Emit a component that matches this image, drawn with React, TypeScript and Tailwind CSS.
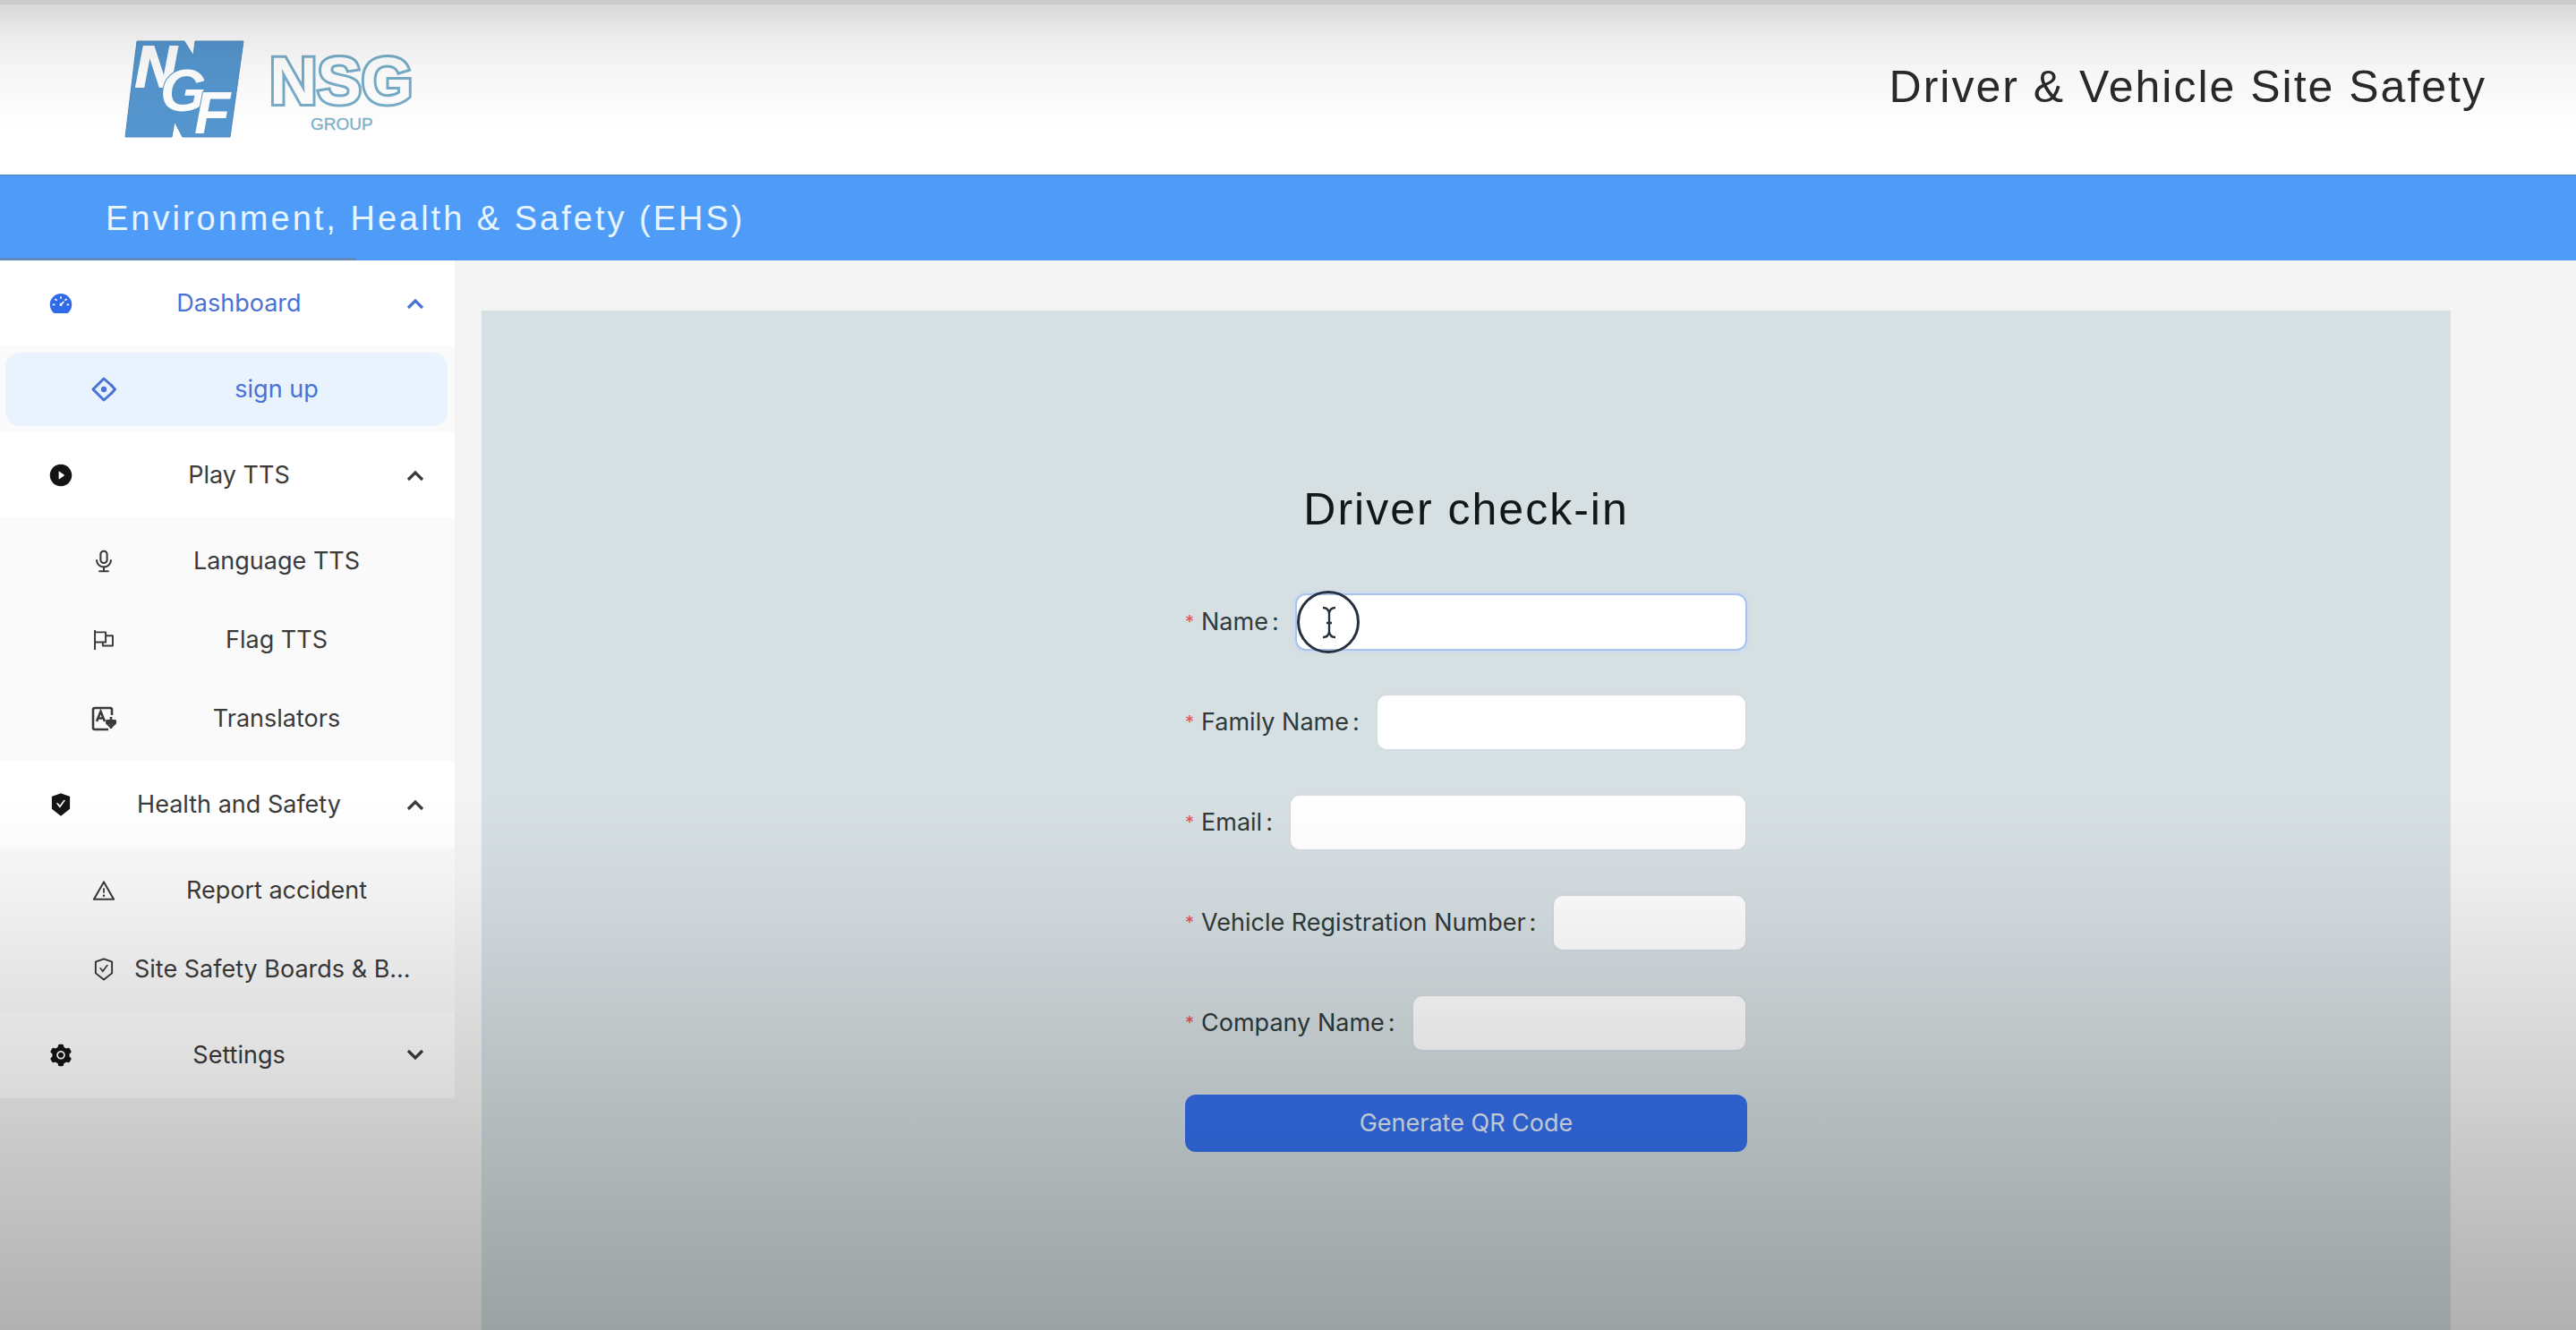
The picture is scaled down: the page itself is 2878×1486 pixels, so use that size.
import { useState } from "react";
import type { ReactNode } from "react";
import {
  AiFillDashboard,
  AiFillPlayCircle,
  AiFillSafetyCertificate,
  AiFillSetting,
  AiOutlineAudio,
  AiOutlineFlag,
  AiOutlineSafetyCertificate,
  AiOutlineWarning,
} from "react-icons/ai";

function SignUpIcon() {
  return (
    <svg viewBox="0 0 28 28" className="size-7" fill="none" stroke="currentColor" strokeWidth="3" aria-hidden="true">
      <path d="M23 10 L14 2 L2 14 L14 26 L23 18" strokeLinejoin="round" />
      <path d="M22 9 L26.5 14 L22 19" strokeLinejoin="round" />
      <circle cx="14" cy="14" r="3.2" fill="currentColor" stroke="none" />
    </svg>
  );
}

function TranslatorIcon() {
  return (
    <svg viewBox="0 0 28 28" className="size-7" fill="none" stroke="currentColor" strokeWidth="2.6" aria-hidden="true">
      <path d="M23 10 V4 Q23 2 21 2 H4 Q2 2 2 4 V24 Q2 26 4 26 H19" />
      <path d="M6 17 L10.5 6 L15 17 M8 13.5 H13" strokeWidth="2.6" />
      <path d="M22 12 V25" strokeWidth="2.6" />
      <rect x="16" y="15" width="12" height="5.5" rx="1.5" fill="currentColor" stroke="none" />
      <path d="M18 20 L22 23.5 L26 20" strokeWidth="2.2" />
    </svg>
  );
}

function Chevron({ open }: { open: boolean }) {
  return (
    <svg viewBox="0 0 20 20" className="size-5" fill="none" stroke="currentColor" strokeWidth="3.2" aria-hidden="true">
      <path d={open ? "M2 15 L10 7 L18 15" : "M2 5 L10 13 L18 5"} />
    </svg>
  );
}

type Item = { label: string; icon: ReactNode; active?: boolean };
type Group = { label: string; icon: ReactNode; open: boolean; active?: boolean; items: Item[] };

const groups: Group[] = [
  {
    label: "Dashboard",
    icon: <AiFillDashboard />,
    open: true,
    active: true,
    items: [{ label: "sign up", icon: <SignUpIcon />, active: true }],
  },
  {
    label: "Play TTS",
    icon: <AiFillPlayCircle />,
    open: true,
    items: [
      { label: "Language TTS", icon: <AiOutlineAudio /> },
      { label: "Flag TTS", icon: <AiOutlineFlag /> },
      { label: "Translators", icon: <TranslatorIcon /> },
    ],
  },
  {
    label: "Health and Safety",
    icon: <AiFillSafetyCertificate />,
    open: true,
    items: [
      { label: "Report accident", icon: <AiOutlineWarning /> },
      { label: "Site Safety Boards & Bulletins", icon: <AiOutlineSafetyCertificate /> },
    ],
  },
  { label: "Settings", icon: <AiFillSetting />, open: false, items: [] },
];

function Logo() {
  return (
    <svg viewBox="0 0 330 120" className="h-[120px] w-[330px]" role="img" aria-label="NSG Group">
      <path
        d="M18 8 H71 L81 24 L83 8 H137 L122 115 H69 L60 98 L57 115 H5 Z"
        fill="#5596cf"
        stroke="#4b88bd"
        strokeWidth="1"
      />
      <g fontFamily="'Liberation Sans', Arial, sans-serif" fontWeight="700" fontStyle="italic" fill="#fff">
        <text x="16" y="59" fontSize="64" stroke="#fff" strokeWidth="2">N</text>
        <text x="44" y="86" fontSize="66" stroke="#5596cf" strokeWidth="2" paintOrder="stroke">G</text>
        <text x="82" y="111" fontSize="66" stroke="#5596cf" strokeWidth="2" paintOrder="stroke">F</text>
      </g>
      <text
        x="166"
        y="78"
        fontFamily="'Liberation Sans', Arial, sans-serif"
        fontWeight="700"
        fontSize="74"
        fill="#fff"
        stroke="#78adc9"
        strokeWidth="6"
        paintOrder="stroke"
      >
        NSG
      </text>
      <text x="212" y="107" fontFamily="'Liberation Sans', Arial, sans-serif" fontSize="19" fill="#82b2ca" stroke="#82b2ca" strokeWidth="0.4">
        GROUP
      </text>
    </svg>
  );
}

function Sidebar() {
  const [open, setOpen] = useState(groups.map((g) => g.open));
  return (
    <nav className="w-[508px] shrink-0 self-start bg-white text-[27px] leading-8 text-[#3a3a3a]">
      {groups.map((group, i) => (
        <div key={group.label}>
          <button
            type="button"
            aria-expanded={open[i]}
            onClick={() => setOpen(open.map((o, j) => (j === i ? !o : o)))}
            className={`flex h-24 w-full items-center pr-[34px] pl-[54px] ${group.active ? "text-[#4a72d6]" : ""}`}
          >
            <span className={`text-[28px] ${group.active ? "text-[#2f6be8]" : "text-[#141414]"}`}>{group.icon}</span>
            <span className="mr-5 ml-[18px] flex-1 truncate text-center">{group.label}</span>
            <Chevron open={open[i]} />
          </button>
          {open[i] && group.items.length > 0 && (
            <ul className="bg-[#fafafa] py-1 pr-2 pl-[6px]">
              {group.items.map((item) => (
                <li key={item.label} className="py-[3px]">
                  <a
                    href="#"
                    className={`flex h-[82px] items-center rounded-2xl pr-8 pl-24 ${item.active ? "bg-[#e8f3fe] text-[#4a72d6]" : ""}`}
                  >
                    <span className="text-[28px]">{item.icon}</span>
                    <span className="ml-5 flex-1 truncate text-center">{item.label}</span>
                  </a>
                </li>
              ))}
            </ul>
          )}
        </div>
      ))}
    </nav>
  );
}

function Pointer() {
  return (
    <svg viewBox="0 0 72 72" className="pointer-events-none absolute top-1/2 left-0 size-[72px] -translate-y-1/2" fill="none" stroke="#27303f" aria-hidden="true">
      <circle cx="37" cy="36" r="33.5" strokeWidth="3" />
      <path d="M31 20 Q37 20 38 26 Q39 20 45 20 M38 25 V49 M31 53 Q37 53 38 47 Q39 53 45 53 M35 37 H41" strokeWidth="2.4" />
    </svg>
  );
}

const fields = [
  { id: "name", label: "Name", focused: true },
  { id: "family", label: "Family Name" },
  { id: "email", label: "Email" },
  { id: "vehicle", label: "Vehicle Registration Number" },
  { id: "company", label: "Company Name" },
];

export default function App() {
  return (
    <div className="relative flex min-h-screen flex-col bg-[#f4f4f4] font-['Inter','Liberation_Sans',sans-serif]">
      <header className="flex h-[195px] items-center justify-between bg-white pr-[100px] pl-[135px]">
        <Logo />
        <h1 className="font-['Liberation_Sans',Arial,sans-serif] text-[50px] tracking-[2px] text-[#2a2a2a]">
          Driver &amp; Vehicle Site Safety
        </h1>
      </header>
      <div className="relative flex h-24 items-center border-t-2 border-[#508fdb] bg-[#4f9bf8] pl-[118px]">
        <h2 className="font-['Liberation_Sans',Arial,sans-serif] text-[38px] tracking-[3px] text-[#e6f5ff]">
          Environment, Health &amp; Safety (EHS)
        </h2>
        <div className="absolute bottom-0 left-0 h-[3px] w-[398px] bg-[#6288c0]" />
      </div>
      <div className="flex flex-1">
        <Sidebar />
        <main className="mt-14 mr-[140px] ml-[30px] flex flex-1 flex-col items-center bg-[#d6dfe2] pt-[190px]">
          <h3 className="font-['Liberation_Sans',Arial,sans-serif] text-[50px] leading-[64px] tracking-[2px] text-[#10181a]">
            Driver check-in
          </h3>
          <form className="mt-[62px] flex w-[628px] flex-col gap-12 text-[27px] text-[#2f3a3c]" onSubmit={(e) => e.preventDefault()}>
            {fields.map((f) => (
              <div key={f.id} className="flex h-16 items-center">
                <label htmlFor={f.id} className="flex shrink-0 items-center whitespace-nowrap">
                  <span className="mr-2 text-[20px] text-[#e0525a]">*</span>
                  {f.label}
                  <span className="mr-[18px] ml-1">:</span>
                </label>
                <div className="relative min-w-0 flex-1">
                  <input
                    id={f.id}
                    required
                    className={`h-16 w-full rounded-xl border-2 bg-white px-5 outline-none ${
                      f.focused ? "border-[#a9c4ea] shadow-[0_0_0_3px_#cfdcec]" : "border-[#d4dcdf]"
                    }`}
                  />
                  {f.focused && <Pointer />}
                </div>
              </div>
            ))}
            <button type="submit" className="h-16 rounded-xl bg-[#3671f0] text-[#e4eefc]">
              Generate QR Code
            </button>
          </form>
        </main>
      </div>
      <div className="pointer-events-none absolute inset-x-0 top-0 h-[150px] border-t-[5px] border-[#cbcbcb] bg-[linear-gradient(to_bottom,rgba(0,0,0,0.15)_0%,rgba(0,0,0,0.08)_25%,rgba(0,0,0,0.035)_50%,rgba(0,0,0,0)_100%)]" />
      <div className="pointer-events-none absolute inset-x-0 bottom-0 h-[600px] bg-[linear-gradient(to_bottom,rgba(0,0,0,0)_0%,rgba(0,0,0,0.03)_17%,rgba(0,0,0,0.086)_36%,rgba(0,0,0,0.15)_57%,rgba(0,0,0,0.2)_74%,rgba(0,0,0,0.275)_100%)]" />
    </div>
  );
}
